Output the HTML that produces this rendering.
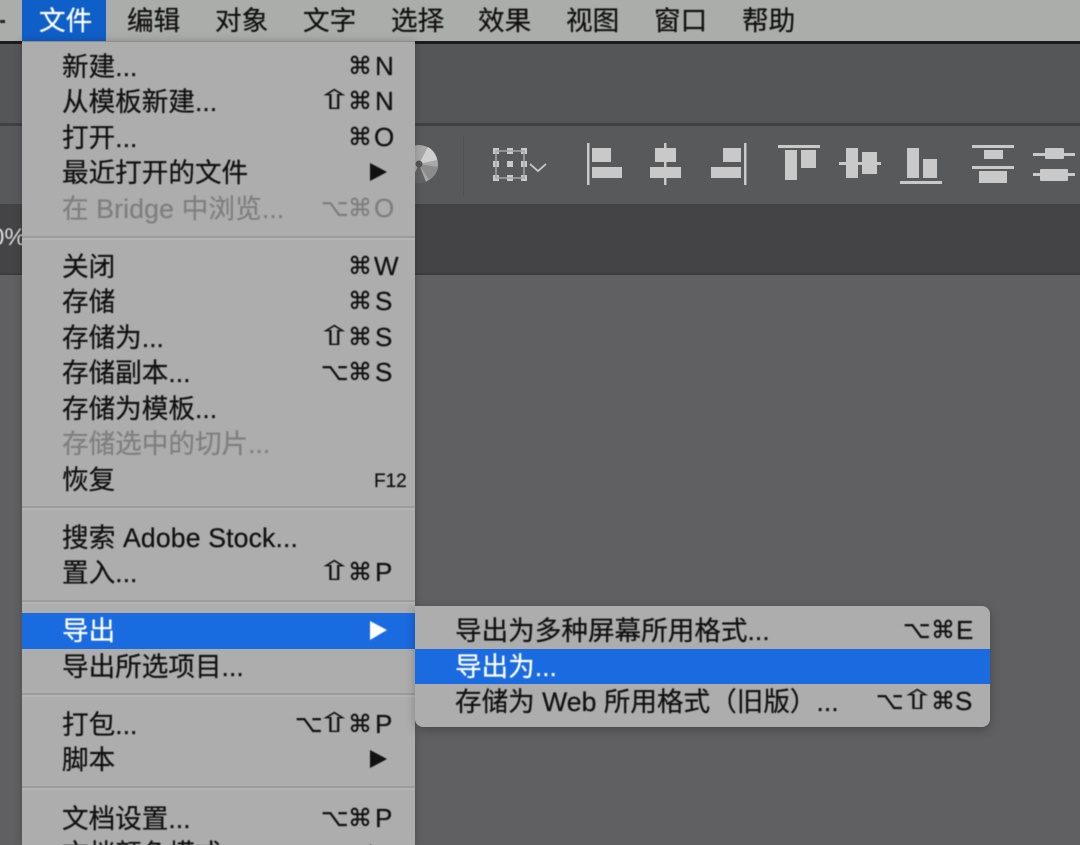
<!DOCTYPE html>
<html lang="zh">
<head>
<meta charset="utf-8">
<title>文件菜单</title>
<style>
html,body{margin:0;padding:0;background:#606062}
#r{position:relative;width:1080px;height:845px;overflow:hidden;background:#606062;font-family:"Liberation Sans","Noto Sans CJK SC",sans-serif;font-size:26.6px;color:#111}
.a{position:absolute}
.t,.s,.k{position:absolute;line-height:36px;height:36px;white-space:nowrap;-webkit-text-stroke:.25px currentColor}
.s{font-family:"DejaVu Sans",sans-serif;font-size:24px;margin-top:-1px}
.u{transform:scaleX(1.6);font-size:27px;transform-origin:50% 50%;-webkit-text-stroke:.1px currentColor}
.k{font-size:26px;margin-top:-1px}
.d{color:#7f7f7f}
.w{color:#fff}
.l{letter-spacing:.15px}
.sep{position:absolute;left:22px;width:393px;height:4px;background:#9c9c9c;border-bottom:2px solid #b4b4b4;box-sizing:border-box}
.txt{position:absolute;left:0;top:1px;width:1080px;height:845px;filter:blur(.45px)}
</style>
</head>
<body>
<div id="r">
  <div class="a" style="left:0;top:0;width:1080px;height:41px;background:#abadaa"></div>
  <div class="a" style="left:0;top:41px;width:1080px;height:3px;background:#1c1c1c"></div>
  <div class="a" style="left:0;top:44px;width:1080px;height:79px;background:#555658"></div>
  <div class="a" style="left:0;top:123px;width:1080px;height:3px;background:#414143"></div>
  <div class="a" style="left:0;top:126px;width:1080px;height:78px;background:#58595b"></div>
  <div class="a" style="left:0;top:204px;width:1080px;height:69px;background:#444446"></div>
  <div class="a" style="left:0;top:273px;width:1080px;height:2px;background:#3c3c3e"></div>
  <div class="a" style="left:463px;top:136px;width:1px;height:60px;background:#505153"></div>
  <span class="a" style="left:-9px;top:220px;line-height:36px;color:#ddd;font-size:24px;filter:blur(.4px)">0%</span>

  <svg class="a" style="left:0;top:0" width="1080" height="845" viewBox="0 0 1080 845">
    <g fill="#c9c9c9">
      <circle cx="419" cy="164" r="19" fill="#a8a8a8"/>
      <path d="M419 164L428 147A19 19 0 0 1 437 160Z" fill="#cfcfcf"/>
      <path d="M419 164L438 167A19 19 0 0 1 429 180Z" fill="#8c8c8c"/>
      <path d="M419 164L426 182A19 19 0 0 1 411 181Z" fill="#636363"/>
      <circle cx="419" cy="164" r="3.5" fill="#555"/>
      <g>
        <rect x="493" y="148" width="6" height="6"/><rect x="507" y="148" width="6" height="6"/><rect x="521" y="148" width="6" height="6"/>
        <rect x="493" y="161" width="6" height="6"/><rect x="507" y="161" width="6" height="6"/><rect x="521" y="161" width="6" height="6"/>
        <rect x="493" y="175" width="6" height="6"/><rect x="507" y="175" width="6" height="6"/><rect x="521" y="175" width="6" height="6"/>
      </g>
      <path d="M496 151H524V178H496Z" fill="none" stroke="#a5a5a5" stroke-width="1.5"/>
      <path d="M530 164L538 171L546 164" fill="none" stroke="#c9c9c9" stroke-width="1.8"/>

      <rect x="587" y="143" width="2.5" height="42"/><rect x="592" y="148" width="19" height="14"/><rect x="592" y="167" width="30" height="11"/>
      <rect x="664" y="143" width="2.5" height="42"/><rect x="655" y="148" width="21" height="14"/><rect x="650" y="167" width="31" height="11"/>
      <rect x="744" y="143" width="2.5" height="42"/><rect x="723" y="148" width="18" height="14"/><rect x="711" y="167" width="30" height="11"/>

      <rect x="778" y="145" width="42" height="3"/><rect x="785" y="150" width="12" height="30"/><rect x="801" y="150" width="15" height="18"/>
      <rect x="839" y="162" width="42" height="3"/><rect x="846" y="148" width="12" height="30"/><rect x="862" y="152" width="15" height="22"/>
      <rect x="900" y="181" width="42" height="3"/><rect x="907" y="148" width="12" height="30"/><rect x="923" y="159" width="14" height="19"/>

      <rect x="972" y="145" width="42" height="3"/><rect x="984" y="150" width="19" height="9"/><rect x="972" y="166" width="42" height="3"/><rect x="979" y="171" width="28" height="12"/>
      <rect x="1033" y="153" width="42" height="3"/><rect x="1045" y="148" width="19" height="11" rx="1"/><rect x="1033" y="173" width="42" height="3"/><rect x="1040" y="169" width="28" height="12" rx="1"/>
    </g>
  </svg>

  <div class="a" style="left:22px;top:0;width:84px;height:41px;background:#0f5fc8"></div>
  <div class="a" style="left:22px;top:41px;width:393px;height:804px;background:#adadad;box-shadow:0 0 8px rgba(0,0,0,.2)"></div>
  <div class="a" style="left:22px;top:41px;width:393px;height:1px;background:#8d8d8d"></div>
  <div class="sep" style="top:236px"></div>
  <div class="sep" style="top:506px"></div>
  <div class="sep" style="top:600px"></div>
  <div class="sep" style="top:693px"></div>
  <div class="sep" style="top:786px"></div>
  <div class="a" style="left:22px;top:613px;width:393px;height:36px;background:#1a6ae0"></div>
  <div class="a" style="left:415px;top:606px;width:575px;height:121px;background:#adadad;border-radius:0 8px 8px 8px;box-shadow:0 3px 10px rgba(0,0,0,.25)"></div>
  <div class="a" style="left:415px;top:649px;width:575px;height:35px;background:#1a6ae0"></div>

  <div class="txt">
    <span class="a" style="left:0;top:19px;width:5px;height:3px;background:#222"></span>

    <span class="t w" style="left:39px;top:2px">文件</span>
    <span class="t" style="left:127px;top:2px">编辑</span>
    <span class="t" style="left:215px;top:2px">对象</span>
    <span class="t" style="left:303px;top:2px">文字</span>
    <span class="t" style="left:391px;top:2px">选择</span>
    <span class="t" style="left:478px;top:2px">效果</span>
    <span class="t" style="left:566px;top:2px">视图</span>
    <span class="t" style="left:654px;top:2px">窗口</span>
    <span class="t" style="left:742px;top:2px">帮助</span>

    <span class="t" style="left:62px;top:48px">新建...</span>
    <span class="s" style="left:348px;top:48px">⌘</span><span class="k" style="left:375px;top:48px">N</span>
    <span class="t" style="left:62px;top:83px">从模板新建...</span>
    <span class="s u" style="left:323px;top:83px">⇧</span><span class="s" style="left:348px;top:83px">⌘</span><span class="k" style="left:375px;top:83px">N</span>
    <span class="t" style="left:62px;top:119px">打开...</span>
    <span class="s" style="left:348px;top:119px">⌘</span><span class="k" style="left:374px;top:119px">O</span>
    <span class="t" style="left:62px;top:154px">最近打开的文件</span>
    <span class="t d l" style="left:62px;top:190px">在 Bridge 中浏览...</span>
    <span class="s d" style="left:321px;top:190px">⌥</span><span class="s d" style="left:348px;top:190px">⌘</span><span class="k d" style="left:374px;top:190px">O</span>

    <span class="t" style="left:62px;top:248px">关闭</span>
    <span class="s" style="left:348px;top:248px">⌘</span><span class="k" style="left:374px;top:248px">W</span>
    <span class="t" style="left:62px;top:283px">存储</span>
    <span class="s" style="left:348px;top:283px">⌘</span><span class="k" style="left:375px;top:283px">S</span>
    <span class="t" style="left:62px;top:319px">存储为...</span>
    <span class="s u" style="left:323px;top:319px">⇧</span><span class="s" style="left:348px;top:319px">⌘</span><span class="k" style="left:375px;top:319px">S</span>
    <span class="t" style="left:62px;top:354px">存储副本...</span>
    <span class="s" style="left:321px;top:354px">⌥</span><span class="s" style="left:348px;top:354px">⌘</span><span class="k" style="left:375px;top:354px">S</span>
    <span class="t" style="left:62px;top:390px">存储为模板...</span>
    <span class="t d" style="left:62px;top:425px">存储选中的切片...</span>
    <span class="t" style="left:62px;top:461px">恢复</span>
    <span class="t" style="left:374px;top:463px;font-size:19px">F12</span>

    <span class="t l" style="left:62px;top:519px">搜索 Adobe Stock...</span>
    <span class="t" style="left:62px;top:554px">置入...</span>
    <span class="s u" style="left:323px;top:554px">⇧</span><span class="s" style="left:348px;top:554px">⌘</span><span class="k" style="left:375px;top:554px">P</span>

    <span class="t w" style="left:62px;top:612px">导出</span>
    <span class="t" style="left:62px;top:648px">导出所选项目...</span>

    <span class="t" style="left:62px;top:706px">打包...</span>
    <span class="s" style="left:295px;top:706px">⌥</span><span class="s u" style="left:323px;top:706px">⇧</span><span class="s" style="left:348px;top:706px">⌘</span><span class="k" style="left:375px;top:706px">P</span>
    <span class="t" style="left:62px;top:741px">脚本</span>

    <span class="t" style="left:62px;top:800px">文档设置...</span>
    <span class="s" style="left:321px;top:800px">⌥</span><span class="s" style="left:348px;top:800px">⌘</span><span class="k" style="left:375px;top:800px">P</span>
    <span class="t" style="left:62px;top:835px">文档颜色模式</span>

    <span class="t" style="left:455px;top:612px">导出为多种屏幕所用格式...</span>
    <span class="s" style="left:903px;top:612px">⌥</span><span class="s" style="left:931px;top:612px">⌘</span><span class="k" style="left:956px;top:612px">E</span>
    <span class="t w" style="left:455px;top:648px">导出为...</span>
    <span class="t" style="left:455px;top:683px">存储为 Web 所用格式（旧版）...</span>
    <span class="s" style="left:876px;top:683px">⌥</span><span class="s u" style="left:906px;top:683px">⇧</span><span class="s" style="left:931px;top:683px">⌘</span><span class="k" style="left:955px;top:683px">S</span>

    <svg class="a" style="left:0;top:-1px" width="1080" height="845" viewBox="0 0 1080 845">
      <polygon points="370,163 387,172 370,181" fill="#111"/>
      <polygon points="370,621 387,630 370,640" fill="#fff"/>
      <polygon points="370,750 387,759 370,768" fill="#111"/>
      <polygon points="370,844 387,853 370,862" fill="#111"/>
    </svg>
  </div>
</div>
</body>
</html>
